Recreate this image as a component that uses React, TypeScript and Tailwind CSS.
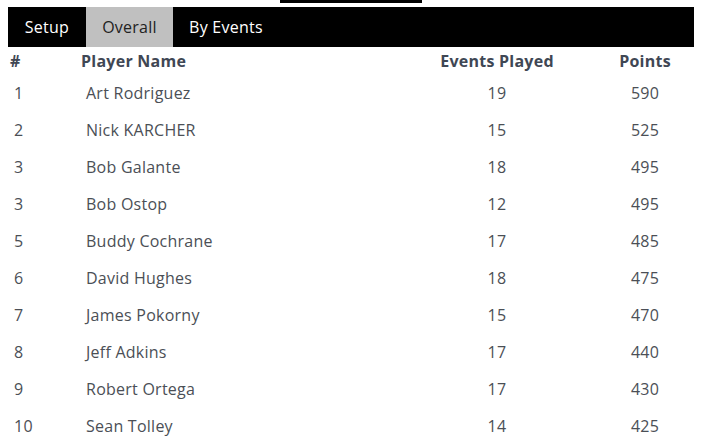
import React from "react";

const rows = [
  ["1", "Art Rodriguez", "19", "590"],
  ["2", "Nick KARCHER", "15", "525"],
  ["3", "Bob Galante", "18", "495"],
  ["3", "Bob Ostop", "12", "495"],
  ["5", "Buddy Cochrane", "17", "485"],
  ["6", "David Hughes", "18", "475"],
  ["7", "James Pokorny", "15", "470"],
  ["8", "Jeff Adkins", "17", "440"],
  ["9", "Robert Ortega", "17", "430"],
  ["10", "Sean Tolley", "14", "425"],
];

export default function App() {
  return (
    <div
      className="w-[702px] h-[445px] overflow-hidden bg-white tracking-[0.25px]"
      style={{ fontFamily: '"Open Sans", "Liberation Sans", sans-serif' }}
    >
      <div className="mx-auto h-[3px] w-[142px] bg-black" />
      <div className="mx-2 mt-1 flex h-10 bg-black text-[16px]">
        <div className="flex w-[78px] items-center justify-center text-white">Setup</div>
        <div className="flex w-[87px] items-center justify-center bg-[#c0c0c0] text-[#222]">Overall</div>
        <div className="flex w-[106px] items-center justify-center text-white">By Events</div>
      </div>
      <div className="mx-2 grid grid-cols-[68px_320px_202px_94px] text-[16px]">
        <div className="flex h-[27px] items-center pl-[2px] font-bold text-[#3f4754]">#</div>
        <div className="flex h-[27px] items-center pl-[5px] font-bold text-[#3f4754]">Player Name</div>
        <div className="flex h-[27px] items-center justify-center font-bold text-[#3f4754]">Events Played</div>
        <div className="flex h-[27px] items-center justify-center font-bold text-[#3f4754]">Points</div>
        {rows.map((r, i) => (
          <React.Fragment key={i}>
            <div className="flex h-[37px] items-center pl-[6px] text-[#4b4f56]">{r[0]}</div>
            <div className="flex h-[37px] items-center pl-[10px] text-[#4b4f56]">{r[1]}</div>
            <div className="flex h-[37px] items-center justify-center text-[#4b4f56]">{r[2]}</div>
            <div className="flex h-[37px] items-center justify-center text-[#4b4f56]">{r[3]}</div>
          </React.Fragment>
        ))}
      </div>
    </div>
  );
}
